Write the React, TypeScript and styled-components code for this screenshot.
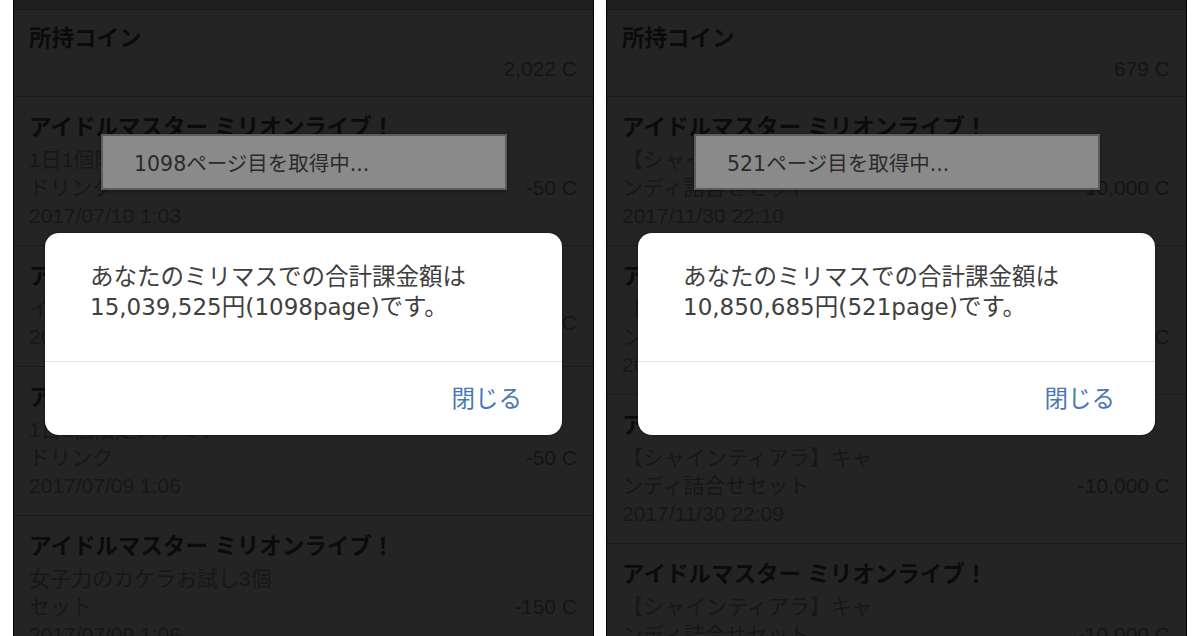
import React from "react";
import styled, { createGlobalStyle } from "styled-components";

const GlobalStyle = createGlobalStyle`
  html, body { margin: 0; padding: 0; background: #ffffff; }
  body {
    font-family: "Liberation Sans", "Noto Sans CJK JP", sans-serif;
    -webkit-font-smoothing: antialiased;
  }
  * { box-sizing: border-box; }
`;

const Page = styled.div`
  display: flex;
  gap: 12px;
  padding: 0 13px;
  height: 636px;
  overflow: hidden;
  background: #ffffff;
`;

const Phone = styled.div`
  position: relative;
  flex: 0 0 581px;
  height: 636px;
  overflow: hidden;
  display: flex;
  flex-direction: column;
  background: #242424;
  border-left: 1px solid #050505;
  border-right: 1px solid #050505;
`;

const TopBar = styled.div`
  flex: 0 0 10px;
  background: #1f1f1f;
  border-bottom: 1px solid #1a1a1a;
`;

const Row = styled.div<{ $compact?: boolean }>`
  flex: 0 0 auto;
  padding: ${(p) => (p.$compact ? "16px 16px 13px 15px" : "18px 16px 15px 15px")};
  border-bottom: 1px solid #1b1b1b;
`;

const RowTitle = styled.div`
  font-size: 22.5px;
  line-height: 26px;
  font-weight: 700;
  color: #0b0b0b;
  white-space: nowrap;
`;

const RowBody = styled.div<{ $compact?: boolean }>`
  display: flex;
  align-items: center;
  justify-content: space-between;
  margin-top: ${(p) => (p.$compact ? "3px" : "5px")};
`;

const SubBlock = styled.div`
  display: flex;
  flex-direction: column;
`;

const SubLine = styled.div`
  font-size: 21px;
  line-height: 28px;
  color: #171717;
  white-space: nowrap;
`;

const Amount = styled.div`
  font-size: 21px;
  line-height: 28px;
  color: #141414;
  white-space: nowrap;
  margin-left: auto;
`;

const Toast = styled.div`
  position: absolute;
  top: 134px;
  left: 87px;
  width: 406px;
  height: 56px;
  display: flex;
  align-items: center;
  padding-left: 31px;
  background: #8a8a8a;
  border: 2px solid #5c5c5c;
  box-shadow: 0 1px 3px rgba(0, 0, 0, 0.5);
  font-family: "DejaVu Sans", "Noto Sans CJK JP", sans-serif;
  font-size: 20.5px;
  color: #2a2a2a;
  white-space: nowrap;
`;

const Dialog = styled.div`
  position: absolute;
  top: 233px;
  left: 31px;
  width: 517px;
  height: 202px;
  display: flex;
  flex-direction: column;
  background: #ffffff;
  border-radius: 14px;
  overflow: hidden;
  box-shadow: 0 0 2px rgba(0, 0, 0, 0.6);
`;

const DialogMessage = styled.div`
  flex: 0 0 128px;
  padding: 29px 20px 0 45px;
  font-family: "DejaVu Sans", "Noto Sans CJK JP", sans-serif;
  font-size: 23.5px;
  line-height: 30px;
  color: #3f3f3f;
  white-space: nowrap;
`;

const Figure = styled.span`
  font-size: 23px;
`;

const DialogActions = styled.div`
  flex: 1;
  display: flex;
  align-items: center;
  justify-content: flex-end;
  padding: 0 40px 4px 0;
  border-top: 1px solid #e2e2e2;
`;

const DialogButton = styled.button`
  border: none;
  background: none;
  padding: 0;
  font-family: "Noto Sans CJK JP", sans-serif;
  font-size: 23.5px;
  line-height: 30px;
  color: #4877b8;
`;

type Entry = {
  title: string;
  lines: string[];
  amount: string;
  compact?: boolean;
};

type Screen = {
  page: string;
  total: string;
  entries: Entry[];
};

const TITLE = "アイドルマスター ミリオンライブ！";

const screens: Screen[] = [
  {
    page: "1098",
    total: "15,039,525",
    entries: [
      { title: "所持コイン", lines: [], amount: "2,022 C", compact: true },
      { title: TITLE, lines: ["1日1個限定スタミナ", "ドリンク", "2017/07/10 1:03"], amount: "-50 C" },
      { title: TITLE, lines: ["イベントチケット", "2017/07/09 23:41"], amount: "-100 C" },
      { title: TITLE, lines: ["1日1個限定スタミナ", "ドリンク", "2017/07/09 1:06"], amount: "-50 C" },
      { title: TITLE, lines: ["女子力のカケラお試し3個", "セット", "2017/07/09 1:06"], amount: "-150 C" },
    ],
  },
  {
    page: "521",
    total: "10,850,685",
    entries: [
      { title: "所持コイン", lines: [], amount: "679 C", compact: true },
      { title: TITLE, lines: ["【シャインティアラ】キャ", "ンディ詰合せセット", "2017/11/30 22:10"], amount: "-10,000 C" },
      { title: TITLE, lines: ["【シャインティアラ】キャ", "ンディ詰合せセット", "2017/11/30 22:10"], amount: "-10,000 C" },
      { title: TITLE, lines: ["【シャインティアラ】キャ", "ンディ詰合せセット", "2017/11/30 22:09"], amount: "-10,000 C" },
      { title: TITLE, lines: ["【シャインティアラ】キャ", "ンディ詰合せセット", "2017/11/30 22:09"], amount: "-10,000 C" },
    ],
  },
];

function PhoneScreen({ screen }: { screen: Screen }) {
  return (
    <Phone>
      <TopBar />
      {screen.entries.map((e, i) => (
        <Row key={i} $compact={e.compact}>
          <RowTitle>{e.title}</RowTitle>
          <RowBody $compact={e.compact}>
            <SubBlock>
              {e.lines.map((l, j) => (
                <SubLine key={j}>{l}</SubLine>
              ))}
            </SubBlock>
            <Amount>{e.amount}</Amount>
          </RowBody>
        </Row>
      ))}
      <Toast>{screen.page}ページ目を取得中...</Toast>
      <Dialog>
        <DialogMessage>
          あなたのミリマスでの合計課金額は
          <br />
          <Figure>{screen.total}</Figure>円(<Figure>{screen.page}page</Figure>)です。
        </DialogMessage>
        <DialogActions>
          <DialogButton>閉じる</DialogButton>
        </DialogActions>
      </Dialog>
    </Phone>
  );
}

export default function App() {
  return (
    <>
      <GlobalStyle />
      <Page>
        {screens.map((s, i) => (
          <PhoneScreen key={i} screen={s} />
        ))}
      </Page>
    </>
  );
}
